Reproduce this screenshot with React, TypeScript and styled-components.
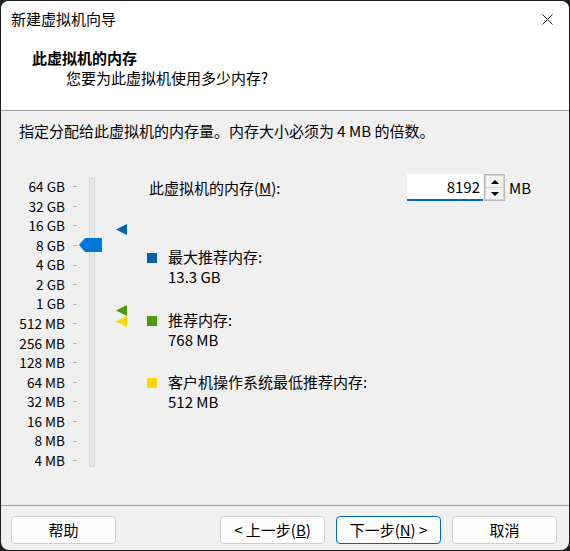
import React from "react";
import styled, { createGlobalStyle } from "styled-components";

const FONT = `"Segoe UI", "Microsoft YaHei UI", "Noto Sans CJK SC", sans-serif`;

const GlobalStyle = createGlobalStyle`
  html, body {
    margin: 0;
    padding: 0;
    background: #1f1f1f;
  }
  body {
    font-family: ${FONT};
    font-size: 15px;
    color: #000;
  }
`;

const STEP = 19.57;
const LABELS = [
  "64 GB", "32 GB", "16 GB", "8 GB", "4 GB", "2 GB", "1 GB",
  "512 MB", "256 MB", "128 MB", "64 MB", "32 MB", "16 MB", "8 MB", "4 MB",
];

// position on the slider for a value in MB (log2 scale, 64 GB at the top)
const posFor = (mb: number) => STEP / 2 + Math.log2(65536 / mb) * STEP;

const Window = styled.div`
  width: 568px;
  height: 549px;
  margin: 1px;
  border-radius: 8px;
  overflow: hidden;
  background: #f0f0f0;
  display: flex;
  flex-direction: column;
`;

const TitleBar = styled.div`
  height: 36px;
  flex: none;
  background: #fff;
  display: flex;
  align-items: center;
  justify-content: space-between;
  padding: 0 16px 0 10px;
`;

const Title = styled.div`
  font-size: 15px;
  line-height: 20px;
`;

const CloseBtn = styled.div`
  width: 11px;
  height: 11px;
  display: flex;
`;

const Header = styled.div`
  height: 74px;
  flex: none;
  background: #fff;
  border-bottom: 1px solid #a0a0a0;
  padding: 11px 0 0 31px;
  box-sizing: border-box;
`;

const Heading = styled.div`
  font-weight: bold;
  line-height: 20px;
`;

const SubHeading = styled.div`
  line-height: 20px;
  padding-left: 34px;
`;

const Body = styled.div`
  flex: 1;
  padding: 10px 18px 0 18px;
`;

const Description = styled.div`
  line-height: 20px;
`;

const Content = styled.div`
  display: flex;
  margin-top: 33px;
`;

const Slider = styled.div`
  display: flex;
  padding-top: 3px;
`;

const Labels = styled.div`
  width: 46px;
  display: flex;
  flex-direction: column;
`;

const Label = styled.div`
  height: ${STEP}px;
  line-height: ${STEP}px;
  font-size: 13.6px;
  text-align: right;
  white-space: nowrap;
`;

const Ticks = styled.div`
  width: 4px;
  margin-left: 8px;
  display: flex;
  flex-direction: column;
`;

const Tick = styled.div`
  height: ${STEP}px;
  display: flex;
  align-items: center;

  &::before {
    content: "";
    width: 4px;
    height: 1px;
    background: #b4b4b4;
  }
`;

const TrackArea = styled.div`
  position: relative;
  width: 53px;
`;

const Track = styled.div`
  position: absolute;
  left: 12px;
  top: 1px;
  bottom: 3px;
  width: 4px;
  background: #e7e7e7;
  border: 1px solid #d6d6d6;
`;

const Thumb = styled.svg`
  position: absolute;
  left: 2px;
  width: 23px;
  height: 14px;
  margin-top: -7px;
`;

const Marker = styled.svg`
  position: absolute;
  left: 39px;
  width: 11px;
  height: 11px;
  margin-top: -5.5px;
`;

const Panel = styled.div`
  margin-left: 17px;
  display: flex;
  flex-direction: column;
`;

const MemRow = styled.div`
  display: flex;
  align-items: center;
  height: 27px;
`;

const MemLabel = styled.div`
  width: 258px;
  padding-left: 2px;
  line-height: 20px;
`;

const Input = styled.div`
  width: 76px;
  height: 27px;
  box-sizing: border-box;
  background: #fff;
  border-bottom: 2px solid #0067c0;
  text-align: right;
  padding-right: 3px;
  line-height: 25px;
`;

const Spinner = styled.div`
  width: 21px;
  height: 27px;
  margin-left: 1px;
  display: flex;
  flex-direction: column;
  border: 1px solid #b9b9b9;
  box-sizing: border-box;
`;

const SpinButton = styled.div<{ $down?: boolean }>`
  flex: 1;
  display: flex;
  align-items: center;
  justify-content: center;
  background: #f3f3f3;
  border: 1px solid #d2d2d2;
  ${(p) => (p.$down ? "border-top: none;" : "")}

  &::before {
    content: "";
    border-left: 4px solid transparent;
    border-right: 4px solid transparent;
    ${(p) => (p.$down ? "border-top: 4px solid #000;" : "border-bottom: 4px solid #000;")}
  }
`;

const Unit = styled.div`
  margin-left: 4px;
  line-height: 20px;
`;

const Legend = styled.div`
  display: flex;
  flex-direction: column;
  gap: 22.5px;
  margin-top: 46px;
`;

const LegendItem = styled.div`
  display: flex;
  align-items: flex-start;
`;

const Swatch = styled.div<{ $color: string }>`
  width: 10px;
  height: 10px;
  margin-top: 6px;
  background: ${(p) => p.$color};
`;

const LegendText = styled.div`
  margin-left: 11px;
  line-height: 20px;
`;

const Footer = styled.div`
  height: 45px;
  flex: none;
  box-sizing: border-box;
  border-top: 1px solid #a0a0a0;
  padding: 10px 12px 0 10px;
  display: flex;
  gap: 11px;
`;

const Spacer = styled.div`
  flex: 1;
`;

const Button = styled.button<{ $primary?: boolean }>`
  width: 105px;
  height: 28px;
  font-family: ${FONT};
  font-size: 15px;
  line-height: 20px;
  color: #000;
  background: #fdfdfd;
  border: 1px solid ${(p) => (p.$primary ? "#0067c0" : "#d0d0d0")};
  border-radius: 4px;
  padding: 0;
`;

const markers = [
  { mb: 13619, color: "#0063b1" },
  { mb: 768, color: "#4a9a0c" },
  { mb: 512, color: "#ffd800" },
];

const legend = [
  { color: "#0063b1", label: "最大推荐内存:", value: "13.3 GB" },
  { color: "#4a9a0c", label: "推荐内存:", value: "768 MB" },
  { color: "#ffd800", label: "客户机操作系统最低推荐内存:", value: "512 MB" },
];

export default function App() {
  const current = 8192;
  return (
    <>
      <GlobalStyle />
      <Window>
        <TitleBar>
          <Title>新建虚拟机向导</Title>
          <CloseBtn>
            <svg width="11" height="11" viewBox="0 0 11 11">
              <path d="M0.5 0.5 L10.5 10.5 M10.5 0.5 L0.5 10.5" stroke="#1a1a1a" strokeWidth="1" />
            </svg>
          </CloseBtn>
        </TitleBar>
        <Header>
          <Heading>此虚拟机的内存</Heading>
          <SubHeading>您要为此虚拟机使用多少内存?</SubHeading>
        </Header>
        <Body>
          <Description>指定分配给此虚拟机的内存量。内存大小必须为 4 MB 的倍数。</Description>
          <Content>
            <Slider>
              <Labels>
                {LABELS.map((l) => (
                  <Label key={l}>{l}</Label>
                ))}
              </Labels>
              <Ticks>
                {LABELS.map((l) => (
                  <Tick key={l} />
                ))}
              </Ticks>
              <TrackArea>
                <Track />
                <Thumb viewBox="0 0 23 14" style={{ top: posFor(current) }}>
                  <polygon points="0,7 6,0 23,0 23,14 6,14" fill="#0078d7" />
                </Thumb>
                {markers.map((m) => (
                  <Marker key={m.mb} viewBox="0 0 11 11" style={{ top: posFor(m.mb) - 2 }}>
                    <polygon points="0,5.5 11,0 11,11" fill={m.color} />
                  </Marker>
                ))}
              </TrackArea>
            </Slider>
            <Panel>
              <MemRow>
                <MemLabel>
                  此虚拟机的内存(<u>M</u>):
                </MemLabel>
                <Input>{current}</Input>
                <Spinner>
                  <SpinButton />
                  <SpinButton $down />
                </Spinner>
                <Unit>MB</Unit>
              </MemRow>
              <Legend>
                {legend.map((item) => (
                  <LegendItem key={item.label}>
                    <Swatch $color={item.color} />
                    <LegendText>
                      {item.label}
                      <br />
                      {item.value}
                    </LegendText>
                  </LegendItem>
                ))}
              </Legend>
            </Panel>
          </Content>
        </Body>
        <Footer>
          <Button>帮助</Button>
          <Spacer />
          <Button>
            &lt; 上一步(<u>B</u>)
          </Button>
          <Button $primary>
            下一步(<u>N</u>) &gt;
          </Button>
          <Button>取消</Button>
        </Footer>
      </Window>
    </>
  );
}
